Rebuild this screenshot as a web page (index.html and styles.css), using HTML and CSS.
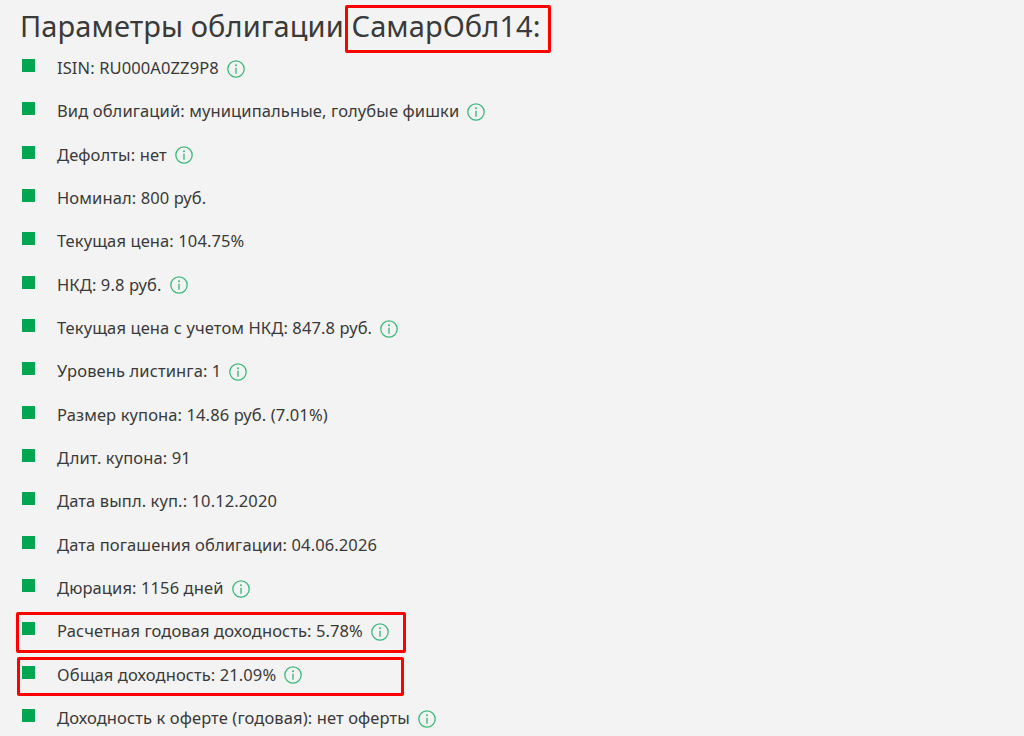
FILE: index.html
```html
<!DOCTYPE html>
<html lang="ru">
<head>
<meta charset="utf-8">
<title>Параметры облигации</title>
<link rel="stylesheet" href="styles.css">
</head>
<body>
<svg class="defs" width="0" height="0" aria-hidden="true"><defs>
<symbol id="info" viewBox="0 0 18 18"><circle cx="9" cy="9" r="8.2" fill="none" stroke="#3fb97a" stroke-width="1.3"/><circle cx="9" cy="5.2" r="1" fill="#3fb97a"/><path d="M9 7.7v6" stroke="#3fb97a" stroke-width="1.4" fill="none"/></symbol>
</defs></svg>
<main class="page">
<h1 class="title">Параметры облигации СамарОбл14:</h1>
<ul class="params">
<li class="param"><span class="text">ISIN: RU000A0ZZ9P8</span><svg class="info"><use href="#info"/></svg></li>
<li class="param"><span class="text">Вид облигаций: муниципальные, голубые фишки</span><svg class="info"><use href="#info"/></svg></li>
<li class="param"><span class="text">Дефолты: нет</span><svg class="info"><use href="#info"/></svg></li>
<li class="param"><span class="text">Номинал: 800 руб.</span></li>
<li class="param"><span class="text">Текущая цена: 104.75%</span></li>
<li class="param"><span class="text">НКД: 9.8 руб.</span><svg class="info"><use href="#info"/></svg></li>
<li class="param"><span class="text">Текущая цена с учетом НКД: 847.8 руб.</span><svg class="info"><use href="#info"/></svg></li>
<li class="param"><span class="text">Уровень листинга: 1</span><svg class="info"><use href="#info"/></svg></li>
<li class="param"><span class="text">Размер купона: 14.86 руб. (7.01%)</span></li>
<li class="param"><span class="text">Длит. купона: 91</span></li>
<li class="param"><span class="text">Дата выпл. куп.: 10.12.2020</span></li>
<li class="param"><span class="text">Дата погашения облигации: 04.06.2026</span></li>
<li class="param"><span class="text">Дюрация: 1156 дней</span><svg class="info"><use href="#info"/></svg></li>
<li class="param"><span class="text">Расчетная годовая доходность: 5.78%</span><svg class="info"><use href="#info"/></svg></li>
<li class="param"><span class="text">Общая доходность: 21.09%</span><svg class="info"><use href="#info"/></svg></li>
<li class="param"><span class="text">Доходность к оферте (годовая): нет оферты</span><svg class="info"><use href="#info"/></svg></li>
</ul>
</main>
<div class="mark mark-title"></div>
<div class="mark mark-yield"></div>
<div class="mark mark-total"></div>
</body>
</html>
```

FILE: styles.css
```css
html, body {
  margin: 0;
  height: 736px;
  overflow: hidden;
  background: #f3f3f3;
}
body {
  font-family: "Noto Sans", "Open Sans", sans-serif;
  color: #3a3a3a;
  position: relative;
}
.defs { position: absolute; }
.page { padding: 7px 0 0 20px; }
.title {
  margin: 0;
  font-size: 29px;
  font-weight: 400;
  letter-spacing: 0.1px;
  line-height: 38px;
  height: 40px;
}
.params {
  list-style: none;
  margin: 0;
  padding: 0;
  display: grid;
  grid-auto-rows: 43.33px;
}
.param {
  display: flex;
  align-items: center;
  gap: 8px;
  height: 43.33px;
  padding-left: 37px;
  position: relative;
  font-size: 16.5px;
  letter-spacing: 0.11px;
}
.text { position: relative; top: -1px; }
.param::before {
  content: "";
  position: absolute;
  left: 2px;
  top: 12px;
  width: 13px;
  height: 13px;
  background: #00a651;
}
.info { width: 18px; height: 18px; flex: none; }
.mark {
  position: absolute;
  border: 3px solid #f00;
  border-radius: 2px;
  box-sizing: border-box;
}
.mark-title { left: 345px; top: 5px; width: 206px; height: 48px; }
.mark-yield { left: 16px; top: 612px; width: 390px; height: 41px; }
.mark-total { left: 17px; top: 657px; width: 387px; height: 39px; }
```
